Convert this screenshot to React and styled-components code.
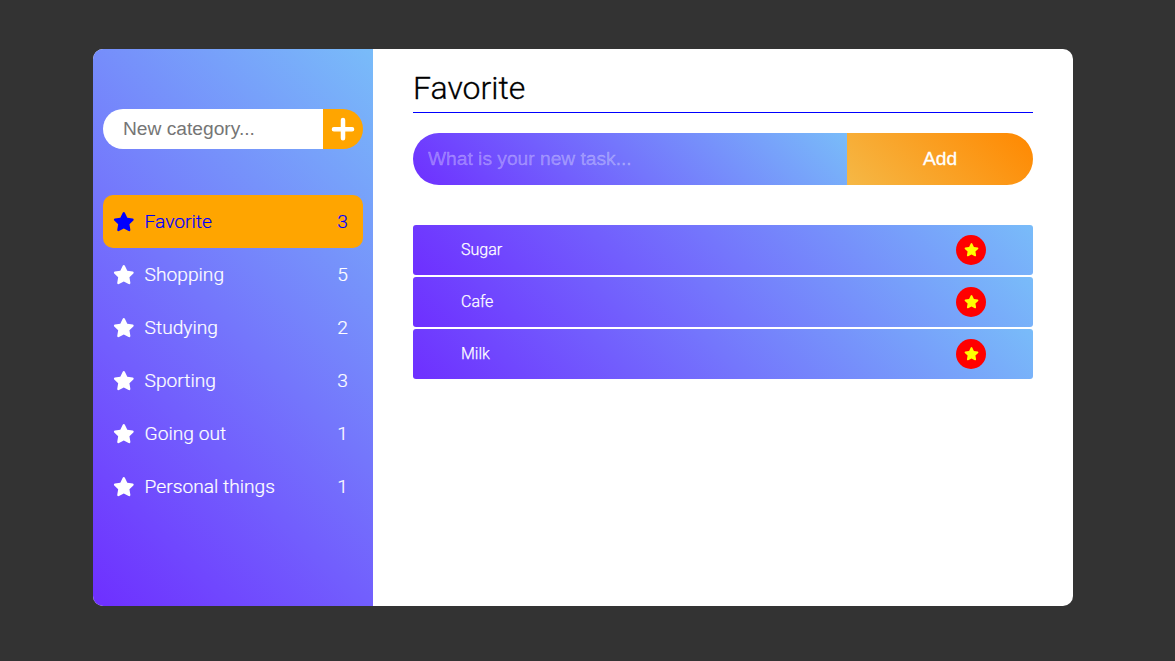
import React from 'react';
import styled, { createGlobalStyle } from 'styled-components';
import { FaStar, FaPlus } from 'react-icons/fa6';

const coolGradient = 'linear-gradient(45deg, #6e2fff, #7476fc 50%, #79bcf9)';

const GlobalStyle = createGlobalStyle`
  * { box-sizing: border-box; }
  body {
    margin: 0;
    background: #333;
    font-family: Roboto, sans-serif;
    font-weight: 300;
  }
`;

const Page = styled.div`
  height: 661px;
  padding: 49px 0 0 93px;
`;

const Window = styled.main`
  display: flex;
  width: 980px;
  height: 557px;
  border-radius: 10px;
  overflow: hidden;
  background: #fff;
`;

const Sidebar = styled.aside`
  width: 280px;
  padding: 60px 10px 0;
  background: ${coolGradient};
`;

const CategoryForm = styled.form`
  display: flex;
  height: 40px;
  margin-bottom: 46px;
  border-radius: 20px;
  overflow: hidden;
`;

const CategoryInput = styled.input`
  width: 220px;
  padding: 0 20px;
  border: 0;
  outline: 0;
  background: #fff;
  font: 400 19.2px 'Liberation Sans', Arial, sans-serif;
  &::placeholder { color: #757575; opacity: 1; }
`;

const PlusButton = styled.button`
  display: flex;
  align-items: center;
  justify-content: center;
  width: 40px;
  padding: 0;
  border: 0;
  background: orange;
  color: #fff;
  svg {
    width: 24px;
    height: 26.3px;
    overflow: visible;
    stroke-width: 24px;
  }
`;

const CategoryList = styled.ul`
  margin: 0;
  padding: 0;
  list-style: none;
`;

const Category = styled.li`
  display: flex;
  align-items: center;
  height: 53px;
  padding: 0 15px 0 10px;
  border-radius: 10px;
  font-size: 19.2px;
  line-height: 22px;
  -webkit-text-stroke: 0.2px currentColor;
  background: ${(p) => (p.$active ? 'orange' : 'transparent')};
  color: ${(p) => (p.$active ? 'blue' : '#fff')};
  svg { width: 21.6px; height: 19.2px; margin-top: 1px; }
`;

const CategoryName = styled.span`
  flex: 1;
  margin-left: 10px;
`;

const Content = styled.section`
  flex: 1;
  padding: 20px 40px;
`;

const Title = styled.h1`
  height: 44px;
  margin: 0 0 20px;
  border-bottom: 1px solid blue;
  font-size: 32px;
  font-weight: 300;
  line-height: 38px;
  -webkit-text-stroke: 0.3px currentColor;
`;

const TaskForm = styled.form`
  display: flex;
  height: 52px;
  margin-bottom: 40px;
  border-radius: 26px;
  overflow: hidden;
`;

const TaskInput = styled.input`
  width: 434px;
  padding: 0 15px;
  border: 0;
  outline: 0;
  background: ${coolGradient};
  color: #fff;
  font: 400 19.2px 'Liberation Sans', Arial, sans-serif;
  &::placeholder {
    color: rgba(255, 255, 255, 0.3);
    opacity: 1;
    -webkit-text-stroke: 0.3px currentColor;
  }
`;

const AddButton = styled.button`
  flex: 1;
  padding: 0;
  border: 0;
  background: linear-gradient(45deg, #f5b846, #ff8800);
  color: #fff;
  font: 400 19.2px 'Liberation Sans', Arial, sans-serif;
  -webkit-text-stroke: 0.3px currentColor;
`;

const TaskList = styled.ul`
  display: flex;
  flex-direction: column;
  gap: 2px;
  margin: 0;
  padding: 0;
  list-style: none;
`;

const Task = styled.li`
  display: flex;
  align-items: center;
  justify-content: space-between;
  height: 50px;
  padding: 0 47px 0 48px;
  border-radius: 3px;
  background: ${coolGradient};
  color: #fff;
  font-size: 16px;
`;

const TaskName = styled.span`
  padding-bottom: 2px;
  -webkit-text-stroke: 0.25px currentColor;
`;

const StarBadge = styled.span`
  display: flex;
  align-items: center;
  justify-content: center;
  width: 30px;
  height: 30px;
  border-radius: 50%;
  background: red;
  color: yellow;
  svg { width: 15px; height: 13.33px; }
`;

const categories = [
  ['Favorite', 3],
  ['Shopping', 5],
  ['Studying', 2],
  ['Sporting', 3],
  ['Going out', 1],
  ['Personal things', 1],
];

const tasks = ['Sugar', 'Cafe', 'Milk'];

export default function App() {
  return (
    <Page>
      <GlobalStyle />
      <Window>
        <Sidebar>
          <CategoryForm>
            <CategoryInput placeholder="New category..." />
            <PlusButton type="button" aria-label="Add category"><FaPlus /></PlusButton>
          </CategoryForm>
          <CategoryList>
            {categories.map(([name, count], i) => (
              <Category key={name} $active={i === 0}>
                <FaStar />
                <CategoryName>{name}</CategoryName>
                <span>{count}</span>
              </Category>
            ))}
          </CategoryList>
        </Sidebar>
        <Content>
          <Title>Favorite</Title>
          <TaskForm>
            <TaskInput placeholder="What is your new task..." />
            <AddButton type="button">Add</AddButton>
          </TaskForm>
          <TaskList>
            {tasks.map((task) => (
              <Task key={task}>
                <TaskName>{task}</TaskName>
                <StarBadge><FaStar /></StarBadge>
              </Task>
            ))}
          </TaskList>
        </Content>
      </Window>
    </Page>
  );
}
